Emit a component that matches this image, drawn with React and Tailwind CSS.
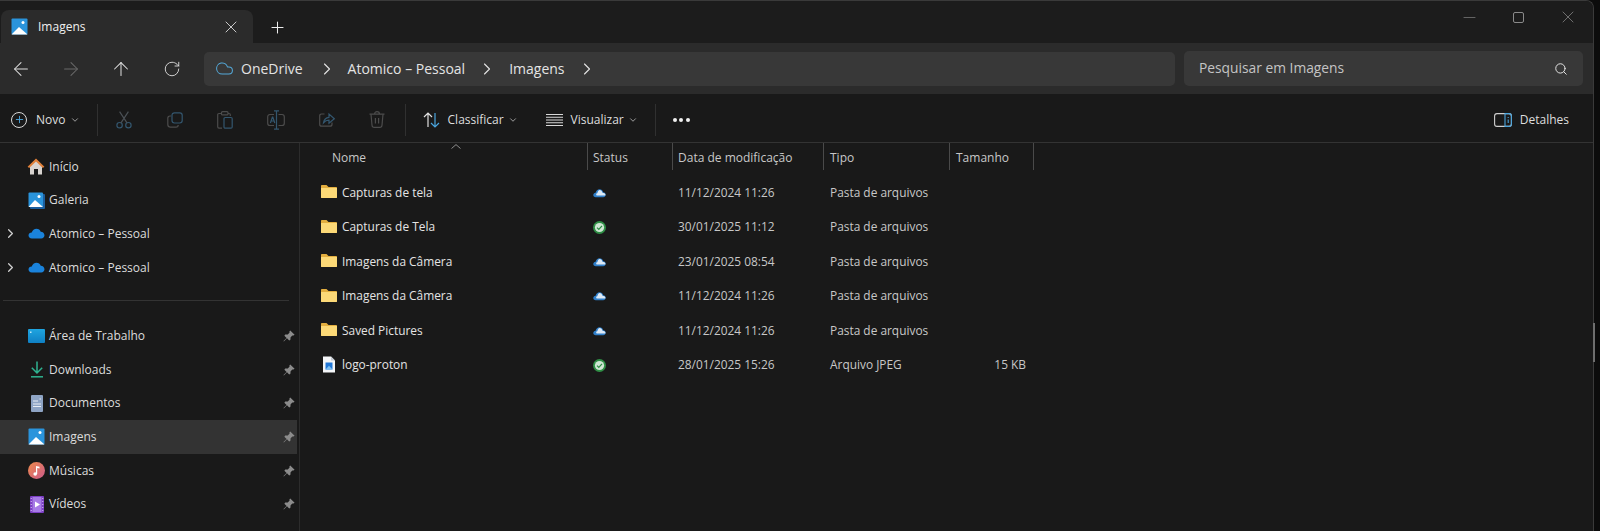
import React from 'react'
import { ArrowLeft, ArrowRight, ArrowUp, RotateCw, ChevronRight, ChevronDown, Search, X, Plus, Minus, Cloud } from 'lucide-react'

const font = "font-['Open_Sans','Noto_Sans',sans-serif]"

// Ícones coloridos do explorer
const PicturesIcon = ({ stack }) => (
  <svg width="17" height="17" viewBox="0 0 17 17">
    {stack && <rect x="2" y="2" width="15" height="15" rx="1" fill="#1c5e9e" />}
    <rect x="0.5" y="0.5" width={stack ? 14.5 : 16} height={stack ? 14.5 : 16} rx="1" fill="#2a94dc" />
    <circle cx={stack ? 11 : 12} cy="4.5" r="1.5" fill="#fff" />
    <path d={stack ? 'M0.5 15 L7 8 L15 15 Z' : 'M0.5 16.5 L8 9 L16.5 16.5 Z'} fill="#fff" />
  </svg>
)

const HomeIcon = () => (
  <svg width="18" height="17" viewBox="0 0 18 17" className="-ml-[1px]">
    <path d="M3 8 L9 2.5 L15 8 V16.5 H11 V11 H7 V16.5 H3 Z" fill="#d8d3cf" />
    <path d="M0.6 8.8 L9 0.6 L17.4 8.8 L15.8 10 L9 3.6 L2.2 10 Z" fill="#e0803a" />
  </svg>
)

const OneDriveIcon = () => (
  <svg width="17" height="11" viewBox="0 0 18 12">
    <path d="M4 11.5 C1.5 11.5 0.3 10 0.3 8.3 C0.3 6.4 1.8 5 3.8 5 C4.6 2.6 6.6 0.8 9 0.8 C11.2 0.8 13 2.2 13.6 4.2 C16 4.2 17.7 6 17.7 8 C17.7 10 16.2 11.5 14.2 11.5 Z" fill="#1a83dc" />
  </svg>
)

const DesktopIcon = () => (
  <svg width="17" height="14" viewBox="0 0 17 14">
    <defs>
      <linearGradient id="desk" x1="0" y1="0" x2="0" y2="1">
        <stop offset="0" stopColor="#1fa5e0" />
        <stop offset="1" stopColor="#0f80c4" />
      </linearGradient>
    </defs>
    <rect width="17" height="14" rx="1" fill="url(#desk)" />
    <rect x="2" y="2.5" width="1.5" height="1.5" fill="#bfe8f8" />
  </svg>
)

const DownloadIcon = () => (
  <svg width="14" height="17" viewBox="0 0 14 17" fill="none" stroke="#2fb391" strokeWidth="1.5">
    <path d="M7 0.5 V11.5 M1.8 6.8 L7 12 L12.2 6.8" />
    <path d="M1 15.8 H13" />
  </svg>
)

const DocumentIcon = () => (
  <svg width="12" height="17" viewBox="0 0 12 17">
    <rect width="12" height="17" rx="1" fill="#8ea4c4" />
    <path d="M2 6 H7 M8.5 4 H10 M2 9 H10 M2 11.5 H10" stroke="#e8edf4" strokeWidth="1" />
  </svg>
)

const MusicIcon = () => (
  <svg width="17" height="17" viewBox="0 0 17 17">
    <defs>
      <linearGradient id="mus" x1="0" y1="0" x2="1" y2="1">
        <stop offset="0" stopColor="#ee8a4a" />
        <stop offset="1" stopColor="#cc5a8c" />
      </linearGradient>
    </defs>
    <circle cx="8.5" cy="8.5" r="8.5" fill="url(#mus)" />
    <path d="M8 12 V4 L11.5 4.8 V6.5 L9.2 6 V12 Z" fill="#fff" />
    <circle cx="7.2" cy="12" r="1.8" fill="#fff" />
  </svg>
)

const VideoIcon = () => (
  <svg width="14" height="17" viewBox="0 0 14 17">
    <rect width="14" height="17" rx="1" fill="#7c3fc4" />
    <rect x="2.5" y="1" width="9" height="15" fill="#a77be6" />
    <path d="M5 5.5 L10 8.5 L5 11.5 Z" fill="#fff" />
    <path d="M0.7 2.5 H1.8 M0.7 5.5 H1.8 M0.7 8.5 H1.8 M0.7 11.5 H1.8 M0.7 14.5 H1.8 M12.2 2.5 H13.3 M12.2 5.5 H13.3 M12.2 8.5 H13.3 M12.2 11.5 H13.3 M12.2 14.5 H13.3" stroke="#d9c6f5" strokeWidth="0.9" />
  </svg>
)

const FolderIcon = () => (
  <svg width="16" height="13" viewBox="0 0 16 13" className="-mt-[2px] shrink-0">
    <path d="M0 1 C0 0.4 0.4 0 1 0 H5.5 L7.5 2 H15 C15.6 2 16 2.4 16 3 V12 C16 12.6 15.6 13 15 13 H1 C0.4 13 0 12.6 0 12 Z" fill="#e3ae3f" />
    <path d="M0 3 H16 V12 C16 12.6 15.6 13 15 13 H1 C0.4 13 0 12.6 0 12 Z" fill="#fcd977" />
  </svg>
)

const FileIcon = () => (
  <svg width="14" height="17" viewBox="0 0 14 17" className="-mt-[2px] shrink-0">
    <path d="M1 0.5 H9 L13 4.5 V16.5 H1 Z" fill="#f4f6f8" />
    <path d="M9 0.5 L13 4.5 H9 Z" fill="#c6ccd4" />
    <rect x="3.5" y="6.5" width="7" height="7" fill="#2278d8" />
    <path d="M3.5 13.5 L7 9.8 L10.5 13.5 Z" fill="#7cc0f4" />
  </svg>
)

const CloudStatus = () => (
  <svg width="13" height="10" viewBox="0 0 14 10">
    <path d="M3 9.5 C1.4 9.5 0.3 8.5 0.3 7.1 C0.3 5.8 1.3 4.8 2.8 4.7 C3.4 2.4 5 1 7 1 C9 1 10.5 2.3 11 4.3 C12.6 4.4 13.7 5.6 13.7 7 C13.7 8.5 12.5 9.5 11 9.5 Z" fill="#2f7fca" />
    <path d="M4.6 7.6 C3.9 7.6 3.4 7.1 3.4 6.5 C3.4 5.8 4 5.2 4.7 5.2 C5 3.2 6 1.8 7.2 1.8 C8.6 1.8 9.9 3 10.2 4.8 C11.6 4.8 13.4 5.6 13.4 7 C13.4 7.3 13.3 7.5 13.2 7.6 Z" fill="#dde9f5" />
  </svg>
)

const CheckStatus = () => (
  <svg width="13" height="13" viewBox="0 0 13 13">
    <circle cx="6.5" cy="6.5" r="6.5" fill="#2f8f46" />
    <circle cx="6.5" cy="6.5" r="4.6" fill="#cfe6d4" />
    <path d="M4 6.6 L5.8 8.4 L9 4.9" fill="none" stroke="#2f8f46" strokeWidth="1.3" />
  </svg>
)

const PinIcon = () => (
  <svg width="12" height="12" viewBox="0 0 12 12">
    <path d="M7.2 0.4 L11.6 4.8 L10.4 5.6 L9.4 5.4 L7.6 7.2 L7.4 9.8 L6.2 10.6 L4 8.3 L0.8 11.4 L0.5 11.1 L3.6 7.9 L1.4 5.7 L2.2 4.6 L4.8 4.4 L6.6 2.6 L6.4 1.6 Z" fill="#8c8c8c" />
  </svg>
)

const Row = ({ icon, label, caret, pinned, active }) => (
  <div className={`mr-[2px] flex h-[33.6px] items-center pr-[2px] ${active ? 'bg-[#333333]' : ''}`}>
    <span className="flex w-[20px] justify-center">
      {caret && <ChevronRight size={15} strokeWidth={2} className="text-[#d0d0d0]" />}
    </span>
    <span className="ml-[8px] flex w-[17px] justify-center">{icon}</span>
    <span className="ml-[4px] flex-1 text-[12px] text-[#dcdcdc]">{label}</span>
    {pinned && <PinIcon />}
  </div>
)

const files = [
  { name: 'Capturas de tela', status: 'cloud', date: '11/12/2024 11:26', type: 'Pasta de arquivos' },
  { name: 'Capturas de Tela', status: 'ok', date: '30/01/2025 11:12', type: 'Pasta de arquivos' },
  { name: 'Imagens da Câmera', status: 'cloud', date: '23/01/2025 08:54', type: 'Pasta de arquivos' },
  { name: 'Imagens da Câmera', status: 'cloud', date: '11/12/2024 11:26', type: 'Pasta de arquivos' },
  { name: 'Saved Pictures', status: 'cloud', date: '11/12/2024 11:26', type: 'Pasta de arquivos' },
  { name: 'logo-proton', status: 'ok', date: '28/01/2025 15:26', type: 'Arquivo JPEG', size: '15 KB', file: true },
]

const Sep = () => <div className="h-[32px] w-px shrink-0 bg-[#303030]" />

const ToolIcon = ({ children }) => <span className="flex w-[50.6px] justify-center">{children}</span>

const Caret = ({ className }) => <ChevronDown size={10} strokeWidth={1.6} className={className} />

const Col = ({ className, children }) => (
  <div className={`flex items-center border-r border-[#4a4a4a] pt-[2px] ${className}`}>{children}</div>
)

export default function App() {
  return (
    <div className={`${font} relative h-[531px] w-[1600px] overflow-hidden bg-[#0c0c0c] pr-[6px]`}>
      <div className="flex h-full flex-col overflow-hidden rounded-tr-[8px] border-t border-r border-[#3a3a3a] bg-[#191919]">
        {/* abas */}
        <div className="flex h-[42px] shrink-0 bg-[#1c1c1c] pl-[1px] pt-[9px]">
          <div className="flex h-[33px] w-[252px] items-center rounded-t-[8px] bg-[#2b2b2b] pl-[10px] pr-[12px]">
            <PicturesIcon />
            <span className="ml-[10px] flex-1 text-[12px] text-[#f0f0f0]">Imagens</span>
            <X size={20} strokeWidth={1.1} className="text-[#d8d8d8]" />
          </div>
          <Plus size={19} strokeWidth={1.3} className="ml-[15px] mt-[8px] text-[#ececec]" />
          <div className="ml-auto -mt-[9px] flex h-[32px] items-center">
            <span className="flex w-[49px] justify-center"><Minus size={19} strokeWidth={0.9} className="text-[#808080]" /></span>
            <span className="flex w-[49px] justify-center"><span className="h-[11px] w-[11px] rounded-[2px] border border-[#8a8a8a]" /></span>
            <span className="flex w-[50px] justify-center"><X size={20} strokeWidth={0.9} className="text-[#8a8a8a]" /></span>
          </div>
        </div>

        {/* navegação */}
        <div className="flex h-[51px] shrink-0 items-center bg-[#2b2b2b] pr-[10px]">
          <div className="flex w-[204px] shrink-0 items-center pl-[10px] text-[#e0e0e0]">
            <ArrowLeft size={22} strokeWidth={1.1} />
            <ArrowRight size={22} strokeWidth={1.1} className="ml-[28px] text-[#6a6a6a]" />
            <ArrowUp size={22} strokeWidth={1.1} className="ml-[28px]" />
            <RotateCw size={18} strokeWidth={1.2} className="ml-[31px]" />
          </div>
          <div className="flex h-[34px] flex-1 items-center rounded-[5px] bg-[#383838] pl-[11px] text-[14px] text-[#e4e4e4]">
            <Cloud size={19} strokeWidth={1.3} className="text-[#54a8d8]" />
            <span className="ml-[7px]">OneDrive</span>
            <ChevronRight size={20} strokeWidth={1.3} className="ml-[14px]" />
            <span className="ml-[11px]">Atomico – Pessoal</span>
            <ChevronRight size={20} strokeWidth={1.3} className="ml-[12px]" />
            <span className="ml-[12px]">Imagens</span>
            <ChevronRight size={20} strokeWidth={1.3} className="ml-[12px]" />
          </div>
          <div className="ml-[9px] flex h-[35px] w-[399px] shrink-0 items-center rounded-[5px] bg-[#383838] pl-[15px] pr-[15px] text-[13.8px] text-[#c4c4c4]">
            <span className="flex-1">Pesquisar em Imagens</span>
            <Search size={14} strokeWidth={1.7} className="text-[#e4e4e4]" />
          </div>
        </div>

        {/* barra de comandos */}
        <div className="flex h-[49px] shrink-0 items-center border-b border-[#333333] pl-[11px] pr-[24px] pt-[3px] text-[12px] text-[#dedede]">
          <span className="flex h-[16px] w-[16px] shrink-0 items-center justify-center rounded-full border border-[#d8d8d8]">
            <Plus size={11} strokeWidth={2} className="text-[#4aa4dc]" />
          </span>
          <span className="ml-[9px] w-[30px]">Novo</span>
          <Caret className="ml-[4px]" />
          <div className="ml-[17px]"><Sep /></div>
          <div className="ml-[1px] flex items-center">
            <ToolIcon>
              <svg width="16" height="18" viewBox="0 0 16 18" fill="none" stroke="#33566e" strokeWidth="1.2">
                <circle cx="3.6" cy="14.2" r="2.7" />
                <circle cx="12.4" cy="14.2" r="2.7" />
                <path d="M5 11.8 L12.4 0.6 M11 11.8 L3.6 0.6" stroke="#4a5055" />
              </svg>
            </ToolIcon>
            <ToolIcon>
              <svg width="16" height="16" viewBox="0 0 16 16" fill="none" strokeWidth="1.2">
                <path d="M4 4 H3 C1.8 4 0.8 5 0.8 6.2 V12.5 C0.8 14 2 15.2 3.5 15.2 H9 C10.2 15.2 11.2 14.2 11.2 13" stroke="#4c4c4c" />
                <rect x="5" y="0.8" width="10.2" height="10.2" rx="2.4" stroke="#33566e" />
              </svg>
            </ToolIcon>
            <ToolIcon>
              <svg width="16" height="18" viewBox="0 0 16 18" fill="none" strokeWidth="1.2">
                <path d="M4.5 2.5 H2 C1.2 2.5 0.7 3 0.7 3.8 V15.8 C0.7 16.6 1.2 17.2 2 17.2 H5 M11 2.5 H12 C12.8 2.5 13.3 3 13.3 3.8 V5" stroke="#4c4c4c" />
                <rect x="4.5" y="0.7" width="6.5" height="3.2" rx="1" stroke="#4c4c4c" />
                <rect x="7" y="6.5" width="8.2" height="10.7" rx="1.2" stroke="#33566e" />
              </svg>
            </ToolIcon>
            <ToolIcon>
              <svg width="18" height="20" viewBox="0 0 18 20" fill="none" strokeWidth="1.2">
                <path d="M7 4.5 H3 C1.6 4.5 0.7 5.4 0.7 6.8 V13.2 C0.7 14.6 1.6 15.5 3 15.5 H7 M11.5 4.5 H15 C16.4 4.5 17.3 5.4 17.3 6.8 V13.2 C17.3 14.6 16.4 15.5 15 15.5 H11.5" stroke="#4c4c4c" />
                <path d="M9.5 0.8 V19.2 M7 0.8 H12 M7 19.2 H12" stroke="#33566e" />
                <path d="M3.4 13 L5.4 7 H5.8 L7.8 13 M4.1 11 H7.1" stroke="#33566e" />
              </svg>
            </ToolIcon>
            <ToolIcon>
              <svg width="16" height="15" viewBox="0 0 16 15" fill="none" strokeWidth="1.2">
                <path d="M5.5 2 H2.5 C1.4 2 0.7 2.8 0.7 3.8 V12.2 C0.7 13.4 1.5 14.2 2.7 14.2 H11 C12.2 14.2 13 13.4 13 12.2 V10.5" stroke="#4c4c4c" />
                <path d="M4.5 10.8 C5 7.5 7 5.5 10 5.3 V2 L15.3 6.7 L10 11.2 V8.2 C8 8.2 6 9 4.5 10.8 Z" stroke="#33566e" />
              </svg>
            </ToolIcon>
            <ToolIcon>
              <svg width="16" height="17" viewBox="0 0 16 17" fill="none" stroke="#4c4c4c" strokeWidth="1.2">
                <path d="M0.5 3.2 H15.5 M5.5 3.2 C5.5 1.8 6.6 0.7 8 0.7 C9.4 0.7 10.5 1.8 10.5 3.2" />
                <path d="M2 3.2 L3 14.2 C3.1 15.5 4 16.3 5.2 16.3 H10.8 C12 16.3 12.9 15.5 13 14.2 L14 3.2" />
                <path d="M6.4 7 V12.5 M9.6 7 V12.5" />
              </svg>
            </ToolIcon>
          </div>
          <div className="ml-[2px]"><Sep /></div>
          <svg width="17" height="16" viewBox="0 0 17 16" fill="none" strokeWidth="1.2" className="ml-[17px] shrink-0">
            <path d="M5 15 V1 M1 5 L5 1 L9 5" stroke="#e0e0e0" />
            <path d="M12 1 V15 M8 11 L12 15 L16 11" stroke="#4aa4dc" />
          </svg>
          <span className="ml-[8px] w-[55px]">Classificar</span>
          <Caret className="ml-[5px]" />
          <svg width="17" height="12" viewBox="0 0 17 12" stroke="#d8d8d8" strokeWidth="1" className="ml-[28px] shrink-0">
            <path d="M0 0.5 H17 M0 3.25 H17 M0 6 H17 M0 8.75 H17 M0 11.5 H17" />
          </svg>
          <span className="ml-[8px] w-[52px]">Visualizar</span>
          <Caret className="ml-[5px]" />
          <div className="ml-[17px]"><Sep /></div>
          <div className="ml-[17px] flex gap-[2.5px]">
            <span className="h-[4px] w-[4px] rounded-full bg-[#f0f0f0]" />
            <span className="h-[4px] w-[4px] rounded-full bg-[#f0f0f0]" />
            <span className="h-[4px] w-[4px] rounded-full bg-[#f0f0f0]" />
          </div>
          <div className="ml-auto flex items-center gap-[8px]">
            <svg width="18" height="14" viewBox="0 0 18 14" fill="none" strokeWidth="1.1">
              <rect x="0.6" y="0.6" width="16.8" height="12.8" rx="2.4" stroke="#d0d0d0" />
              <path d="M11 0.6 H15 C16.5 0.6 17.4 1.5 17.4 3 V11 C17.4 12.5 16.5 13.4 15 13.4 H11 Z" stroke="#4aa4dc" />
              <path d="M14.2 4 V5 M14.2 6.4 V10" stroke="#4aa4dc" />
            </svg>
            <span>Detalhes</span>
          </div>
        </div>

        {/* conteúdo */}
        <div className="flex flex-1 overflow-hidden">
          <aside className="w-[300px] shrink-0 border-r border-[#2c2c2c] pt-[7px]">
            <Row icon={<HomeIcon />} label="Início" />
            <Row icon={<PicturesIcon stack />} label="Galeria" />
            <Row icon={<OneDriveIcon />} label="Atomico – Pessoal" caret />
            <Row icon={<OneDriveIcon />} label="Atomico – Pessoal" caret />
            <div className="mb-[18px] ml-[3px] mr-[10px] mt-[16px] h-px bg-[#333333]" />
            <Row icon={<DesktopIcon />} label="Área de Trabalho" pinned />
            <Row icon={<DownloadIcon />} label="Downloads" pinned />
            <Row icon={<DocumentIcon />} label="Documentos" pinned />
            <Row icon={<PicturesIcon />} label="Imagens" pinned active />
            <Row icon={<MusicIcon />} label="Músicas" pinned />
            <Row icon={<VideoIcon />} label="Vídeos" pinned />
          </aside>

          <main className="relative flex-1 text-[12px]">
            <svg width="10" height="5" viewBox="0 0 10 5" fill="none" stroke="#9a9a9a" strokeWidth="0.9" className="absolute left-[151px] top-[1px]">
              <path d="M0.5 4.5 L5 0.6 L9.5 4.5" />
            </svg>
            <div className="grid h-[27px] grid-cols-[288px_85px_151px_126px_84px] text-[#c8c8c8]">
              <Col className="pl-[32px]">Nome</Col>
              <Col className="pl-[5px]">Status</Col>
              <Col className="pl-[5px]">Data de modificação</Col>
              <Col className="pl-[6px]">Tipo</Col>
              <Col className="pl-[6px]">Tamanho</Col>
            </div>
            <div className="pt-[5.5px] text-[11.9px]">
              {files.map((f, i) => (
                <div key={i} className="grid h-[34.5px] grid-cols-[288px_85px_151px_126px_84px] items-center">
                  <div className="flex items-center pl-[21px] text-[#e4e4e4]">
                    <span className="flex w-[16px] justify-center">{f.file ? <FileIcon /> : <FolderIcon />}</span>
                    <span className="ml-[5px]">{f.name}</span>
                  </div>
                  <div className="ml-[4px] flex w-[14px] justify-center">
                    {f.status === 'ok' ? <CheckStatus /> : <CloudStatus />}
                  </div>
                  <div className="pl-[5px] text-[#c8c8c8]">{f.date}</div>
                  <div className="pl-[6px] text-[#c8c8c8]">{f.type}</div>
                  <div className="pr-[8px] text-right text-[#c8c8c8]">{f.size}</div>
                </div>
              ))}
            </div>
          </main>
        </div>
      </div>
      {/* marca clara na borda direita */}
      <div className="absolute left-[1593px] top-[323px] h-[39px] w-[2px] bg-[#6e6e6e]" />
    </div>
  )
}
